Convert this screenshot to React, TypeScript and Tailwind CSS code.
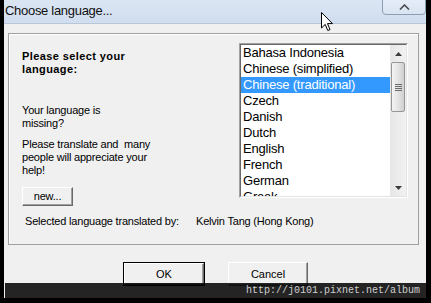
import React from 'react';

const languages = [
  'Bahasa Indonesia',
  'Chinese (simplified)',
  'Chinese (traditional)',
  'Czech',
  'Danish',
  'Dutch',
  'English',
  'French',
  'German',
  'Greek',
];

function ListBox() {
  const selected = 'Chinese (traditional)';
  return (
    <div className="w-[169px] h-[155px] flex border border-t-[#a0a0a0] border-l-[#a0a0a0] border-r-white border-b-white">
      <div className="flex-1 flex bg-white overflow-hidden border border-t-[#696969] border-l-[#696969] border-r-[#e3e3e3] border-b-[#e3e3e3]">
        <div className="flex-1 flex flex-col overflow-hidden text-[13px] text-black">
          {languages.map((lang) => (
            <div
              key={lang}
              className={
                'h-[16px] shrink-0 leading-[16px] px-[2px] whitespace-nowrap ' +
                (lang === selected ? 'bg-[#3399ff] text-white' : '')
              }
            >
              {lang}
            </div>
          ))}
        </div>
        {/* scrollbar */}
        <div className="w-[16px] shrink-0 flex flex-col bg-gradient-to-r from-[#e6e6e6] to-[#f2f2f2]">
          <div className="h-[17px] shrink-0 flex items-center justify-center">
            <svg width="7" height="4" viewBox="0 0 7 4">
              <polygon points="0,4 3.5,0 7,4" fill="#3c3c3c" />
            </svg>
          </div>
          <div className="h-[50px] shrink-0 mx-[1px] rounded-[2px] border border-[#979797] bg-gradient-to-r from-[#f4f4f4] via-[#e4e4e4] to-[#cfcfcf] flex flex-col items-center justify-center gap-[1px]">
            <div className="w-[7px] h-[1px] bg-[#6b6b6b]" />
            <div className="w-[7px] h-[1px] bg-[#6b6b6b]" />
            <div className="w-[7px] h-[1px] bg-[#6b6b6b]" />
            <div className="w-[7px] h-[1px] bg-[#6b6b6b]" />
          </div>
          <div className="flex-1" />
          <div className="h-[17px] shrink-0 flex items-center justify-center">
            <svg width="7" height="4" viewBox="0 0 7 4">
              <polygon points="0,0 3.5,4 7,0" fill="#3c3c3c" />
            </svg>
          </div>
        </div>
      </div>
    </div>
  );
}

function ClassicButton({ label, className, isDefault }: { label: string; className: string; isDefault?: boolean }) {
  const inner = (
    <div className="flex-1 flex items-center justify-center bg-[#f0f0f0] border border-t-white border-l-white border-r-[#696969] border-b-[#696969] shadow-[inset_-1px_-1px_0_#a0a0a0] text-[11px] text-black">
      {label}
    </div>
  );
  if (isDefault) {
    return <div className={'flex border border-black ' + className}>{inner}</div>;
  }
  return <div className={'flex ' + className}>{inner}</div>;
}

export default function App() {
  return (
    <div className="w-[431px] h-[303px] bg-black flex overflow-hidden relative" style={{ fontFamily: '"Liberation Sans", Arial, sans-serif' }}>
      <div className="w-[4px] shrink-0" />
      <div className="w-[422px] h-[298px] shrink-0 flex flex-col relative bg-[#f0f0f0]">
        {/* title bar */}
        <div className="h-[24px] shrink-0 relative flex bg-gradient-to-b from-[#dbe6f4] to-[#d0ddef] border-b border-[#b9c6d8]">
          <span className="pl-[1px] text-[13px] leading-[21px] tracking-[-0.3px] text-[#101010]">Choose language...</span>
          <div className="absolute right-0 top-[-3px] w-[44px] h-[18px] rounded-b-[4px] rounded-tl-[4px] border border-[#8d9db4] bg-gradient-to-b from-[#e6eef8] to-[#d9e4f2] flex justify-center pt-[6px]">
            <svg width="11" height="6" viewBox="0 0 11 6">
              <polyline points="1,5.5 5.5,1 10,5.5" fill="none" stroke="#4a4a4a" strokeWidth="1.6" />
            </svg>
          </div>
        </div>

        {/* content */}
        <div className="flex-1 flex flex-col px-[4px] pt-[9px]">
          <div className="w-[411px] h-[212px] shrink-0 flex flex-col border border-[#a0a0a0] shadow-[inset_1px_1px_0_#ffffff] text-[11px] leading-[13px] tracking-[-0.2px] text-black">
            <div className="flex pl-[13px] pt-[9px]">
              <div className="w-[217px] shrink-0 flex flex-col items-start pt-[7px]">
                <p className="font-bold tracking-[0.4px]">
                  Please select your
                  <br />
                  language:
                </p>
                <p className="mt-[28px]">
                  Your language is
                  <br />
                  missing?
                </p>
                <p className="mt-[8px] whitespace-pre">
                  {'Please translate and  many'}
                  <br />
                  people will appreciate your
                  <br />
                  help!
                </p>
                <ClassicButton label="new..." className="mt-[10px] w-[51px] h-[19px]" />
              </div>
              <ListBox />
            </div>
            <div className="flex mt-[9px] pl-[16px]">
              <span className="w-[171px] shrink-0">Selected language translated by:</span>
              <span>Kelvin Tang (Hong Kong)</span>
            </div>
          </div>

          <div className="flex justify-center gap-[23px] mt-[17px] pl-[1px]">
            <ClassicButton label="OK" className="w-[82px] h-[24px]" isDefault />
            <ClassicButton label="Cancel" className="w-[80px] h-[24px]" />
          </div>
        </div>

        {/* watermark bar */}
        <div className="absolute left-[1px] right-0 bottom-0 h-[15px] bg-black/85 flex justify-end pr-[6px]">
          <span className="text-[10px] leading-[15px] text-[#cfcfcf]" style={{ fontFamily: '"Liberation Mono", monospace' }}>
            http://j0101.pixnet.net/album
          </span>
        </div>
      </div>
      <div className="flex-1" />

      {/* mouse cursor */}
      <svg className="absolute left-[321px] top-[12px]" width="13" height="20" viewBox="0 0 13 20">
        <path d="M0.5 0.5 L0.5 16 L4.2 12.4 L6.8 18.5 L9 17.6 L6.5 11.6 L11.5 11.6 Z" fill="#ffffff" stroke="#000000" strokeWidth="1" strokeLinejoin="round" />
      </svg>
    </div>
  );
}
